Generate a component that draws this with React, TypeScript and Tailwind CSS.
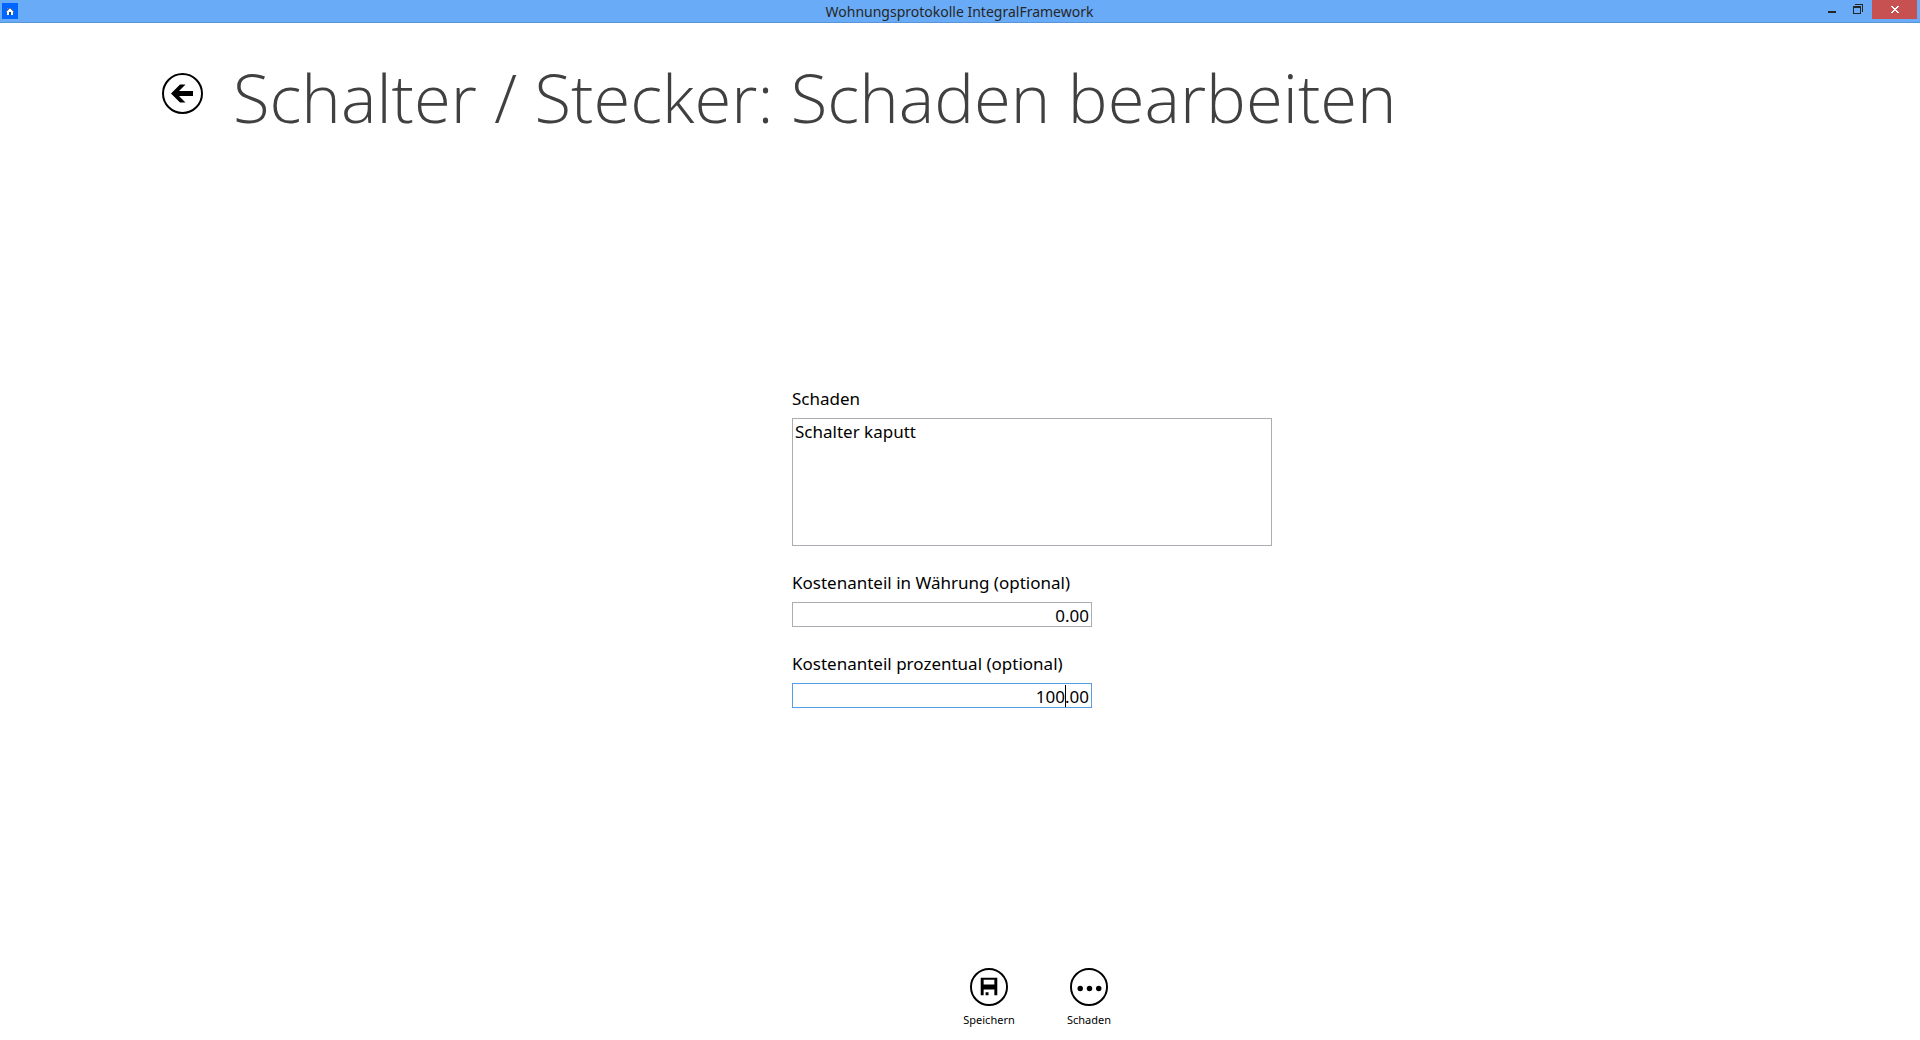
import { useState } from "react";
import type { ReactNode } from "react";

export default function App() {
  const [damage, setDamage] = useState("Schalter kaputt");
  const [amount, setAmount] = useState("0.00");
  const [percent, setPercent] = useState("100.00");

  return (
    <div className="flex min-h-screen flex-col bg-white font-['Noto_Sans','Open_Sans',sans-serif] text-black">
      <TitleBar />

      <header className="flex items-start gap-[30px] pt-6 pl-[162px]">
        <button type="button" aria-label="Zurück" className="mt-[26px]">
          <BackIcon />
        </button>
        <h1 className="font-['Open_Sans',sans-serif] text-[67px] leading-[100px] font-light text-[#404040]">
          Schalter / Stecker: Schaden bearbeiten
        </h1>
      </header>

      <main className="flex flex-1 items-center justify-center pb-5 pl-36">
        <form className="flex w-[480px] flex-col gap-[25px]" onSubmit={(e) => e.preventDefault()}>
          <Field id="damage" label="Schaden">
            <textarea
              id="damage"
              className="block h-32 w-full resize-none border border-[#abadb3] px-0.5 py-px text-[17px] leading-6 outline-none focus:border-[#569de5]"
              value={damage}
              onChange={(e) => setDamage(e.target.value)}
            />
          </Field>

          <Field id="amount" label="Kostenanteil in Währung (optional)">
            <input
              id="amount"
              className="block h-[25px] w-[300px] border border-[#abadb3] px-0.5 pt-0.5 text-right text-[17px] outline-none focus:border-[#569de5]"
              value={amount}
              onChange={(e) => setAmount(e.target.value)}
            />
          </Field>

          <Field id="percent" label="Kostenanteil prozentual (optional)">
            <div className="relative w-[300px]">
              <input
                id="percent"
                className="block h-[25px] w-full border border-[#569de5] px-0.5 pt-0.5 text-right text-[17px] caret-transparent outline-none"
                value={percent}
                onChange={(e) => setPercent(e.target.value)}
              />
              <span className="absolute top-0.5 right-[26px] h-[22px] w-px bg-black" />
            </div>
          </Field>
        </form>
      </main>

      <footer className="flex justify-center pb-3 pl-[158px]">
        <AppBarButton label="Speichern">
          <path fillRule="evenodd" d="M11 10h17v18h-17zM14 12v5h11v-5zM14 22v6h2v-3h3v3h6v-6z" />
        </AppBarButton>
        <AppBarButton label="Schaden">
          <circle cx="10.5" cy="21" r="2.8" />
          <circle cx="20" cy="21" r="2.8" />
          <circle cx="29.5" cy="21" r="2.8" />
        </AppBarButton>
      </footer>
    </div>
  );
}

function TitleBar() {
  return (
    <div className="flex h-[23px] items-start justify-between border-b border-[#5795d6] bg-[#6aabf7]">
      <div className="flex flex-1 pt-[3px] pl-0.5">
        <HomeIcon />
      </div>
      <div className="font-['Noto_Sans',sans-serif] text-sm leading-6 text-[#262626]">
        Wohnungsprotokolle IntegralFramework
      </div>
      <div className="flex flex-1 justify-end pr-[3px]">
        <button type="button" aria-label="Minimieren" className="flex h-[19px] w-[26px] justify-center">
          <svg width="26" height="19" shapeRendering="crispEdges">
            <path d="M8 11h8v2h-8z" fill="#262626" />
          </svg>
        </button>
        <button type="button" aria-label="Wiederherstellen" className="flex h-[19px] w-[26px] justify-center">
          <svg width="26" height="19" fill="#262626" fillRule="evenodd" shapeRendering="crispEdges">
            <path d="M7 6h8v8h-8zM8 8v5h6v-5z" />
            <path d="M9 4h8v8h-1v-7h-7z" />
          </svg>
        </button>
        <button
          type="button"
          aria-label="Schließen"
          className="flex h-[19px] w-[45px] items-center justify-center bg-[#c75050]"
        >
          <svg width="45" height="19" fill="#fff" shapeRendering="crispEdges">
            <path d="M19 6h2v1h1v1h2v-1h1v-1h2v1h-1v1h-1v1h-1v1h1v1h1v1h1v1h-2v-1h-1v-1h-2v1h-1v1h-2v-1h1v-1h1v-1h1v-1h-1v-1h-1v-1h-1z" />
          </svg>
        </button>
      </div>
    </div>
  );
}

function HomeIcon() {
  return (
    <svg width="16" height="16" shapeRendering="crispEdges">
      <path d="M0 0h16v16h-16z" fill="#0066ff" />
      <path d="M8 5h1v1h1v1h1v1h1v1h-1v3h-6v-3h-1v-1h1v-1h1v-1h1v-1z" fill="#fff" />
      <path d="M7 5h2v1h1v1h1v1h1v1h-1v-1h-1v-1h-1v-1h-2v1h-1v1h-1v1h-1v-1h1v-1h1v-1h1zM5 5h1v1h-1z" fill="#8b7a72" />
      <path d="M7 9h2v3h-2z" fill="#17479e" />
    </svg>
  );
}

function BackIcon() {
  return (
    <svg width="41" height="41" viewBox="0 0 41 41">
      <circle cx="20.5" cy="20.5" r="19.5" fill="none" stroke="#000" strokeWidth="2" />
      <path d="M9 20.5l9-9h5.5l-6.5 6.5h14v5h-14l6.5 6.5h-5.5z" />
    </svg>
  );
}

function Field({ id, label, children }: { id: string; label: string; children: ReactNode }) {
  return (
    <div className="flex flex-col gap-[7px]">
      <label htmlFor={id} className="text-[17px] leading-6">
        {label}
      </label>
      {children}
    </div>
  );
}

function AppBarButton({ label, children }: { label: string; children: ReactNode }) {
  return (
    <button type="button" className="flex w-[100px] flex-col items-center gap-1.5 text-[11px] leading-4">
      <svg width="38" height="38" viewBox="0 0 39 39">
        <circle cx="19.5" cy="19.5" r="18.5" fill="none" stroke="#000" strokeWidth="2" />
        {children}
      </svg>
      {label}
    </button>
  );
}
